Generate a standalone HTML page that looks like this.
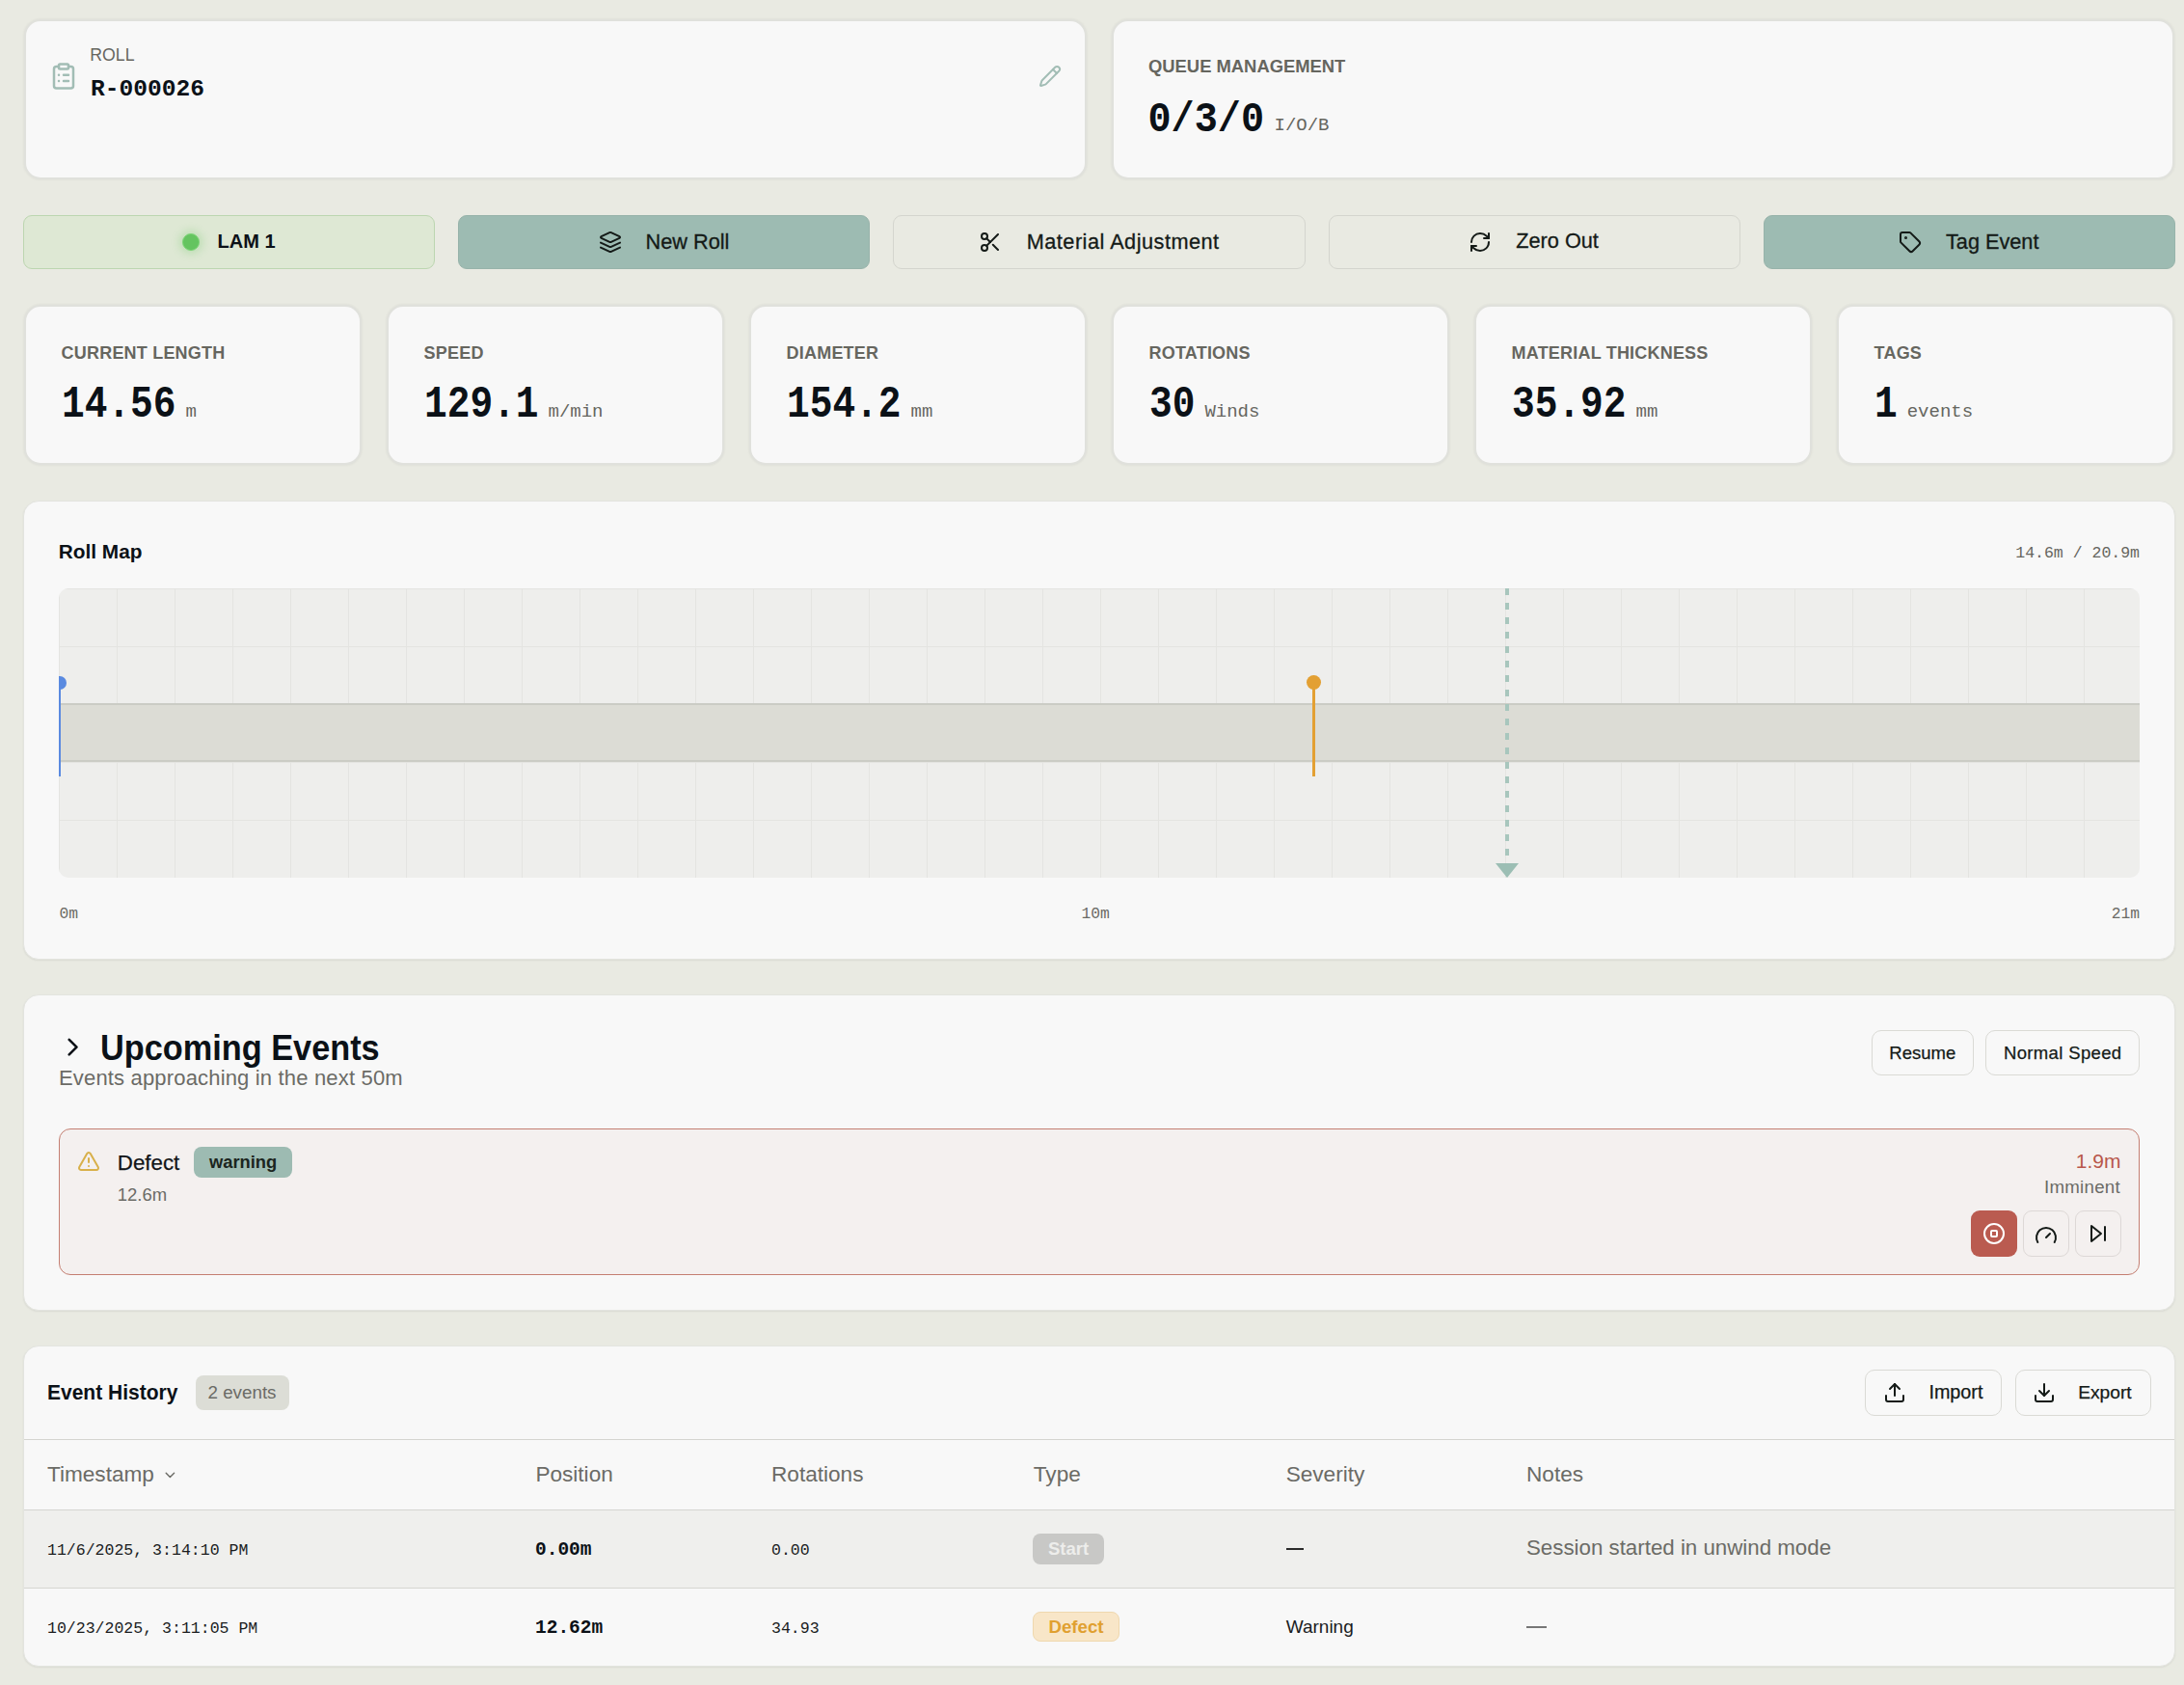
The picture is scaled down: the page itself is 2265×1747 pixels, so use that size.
<!DOCTYPE html>
<html><head><meta charset="utf-8">
<style>
*{box-sizing:border-box;margin:0;padding:0}
html,body{width:2265px;height:1747px;overflow:hidden}
body{background:#E9EAE2;font-family:'Liberation Sans',sans-serif;color:#111417;position:relative}
.t{position:absolute;white-space:nowrap}
.r{position:absolute}
svg{display:block}
</style></head><body>

<div class="r" style="left:25px;top:20px;width:1102px;height:166px;background:#F8F8F8;border:2px solid #E0E1DC;border-radius:17px;box-shadow:0 0 2px 1px rgba(0,0,0,0.035)"></div>
<div class="r" style="left:1153px;top:20px;width:1102px;height:166px;background:#F8F8F8;border:2px solid #E0E1DC;border-radius:17px;box-shadow:0 0 2px 1px rgba(0,0,0,0.035)"></div>
<svg class="r" style="left:51px;top:64px;" width="30" height="30" viewBox="0 0 24 24" fill="none" stroke="#A2BDB5" stroke-width="2" stroke-linecap="round" stroke-linejoin="round"><rect width="8" height="4" x="8" y="2" rx="1" ry="1"/><path d="M16 4h2a2 2 0 0 1 2 2v14a2 2 0 0 1-2 2H6a2 2 0 0 1-2-2V6a2 2 0 0 1 2-2h2"/><path d="M12 11h4"/><path d="M12 16h4"/><path d="M8 11h.01"/><path d="M8 16h.01"/></svg>
<div class="t" style="left:93.3px;top:49.02px;font-size:17.7px;line-height:17.7px;font-family:'Liberation Sans',sans-serif;font-weight:normal;color:#66665F;">ROLL</div>
<div class="t" style="left:94px;top:81.15px;font-size:24.6px;line-height:24.6px;font-family:'Liberation Mono',monospace;font-weight:bold;color:#0B1117;">R-000026</div>
<svg class="r" style="left:1077px;top:67px;" width="24" height="24" viewBox="0 0 24 24" fill="none" stroke="#A2BDB5" stroke-width="2" stroke-linecap="round" stroke-linejoin="round"><path d="M21.174 6.812a1 1 0 0 0-3.986-3.987L3.842 16.174a2 2 0 0 0-.5.83l-1.321 4.352a.5.5 0 0 0 .623.622l4.353-1.32a2 2 0 0 0 .83-.497z"/><path d="m15 5 4 4"/></svg>
<div class="t" style="left:1191px;top:59.92px;font-size:18.4px;line-height:18.4px;font-family:'Liberation Sans',sans-serif;font-weight:bold;color:#66665F;">QUEUE MANAGEMENT</div>
<div class="t" style="left:1190.5px;top:106.00px;font-size:40.2px;line-height:40.2px;font-family:'Liberation Mono',monospace;font-weight:bold;color:#0B1117;transform:scale(1.0,1.085);transform-origin:0 30.80px;">0/3/0</div>
<div class="t" style="left:1321.5px;top:120.94px;font-size:19px;line-height:19px;font-family:'Liberation Mono',monospace;font-weight:normal;color:#66665F;">I/O/B</div>
<div class="r" style="left:24px;top:223px;width:427.2px;height:56px;border-radius:9px;background:#DEE8D4;border:1px solid #BCD6B0"></div>
<div class="r" style="left:475.2px;top:223px;width:427.2px;height:56px;border-radius:9px;background:#9DBBB2;border:1px solid #97B3AA"></div>
<div class="r" style="left:926.4px;top:223px;width:427.2px;height:56px;border-radius:9px;border:1px solid #D4D5CE"></div>
<div class="r" style="left:1377.6px;top:223px;width:427.2px;height:56px;border-radius:9px;border:1px solid #D4D5CE"></div>
<div class="r" style="left:1828.8px;top:223px;width:427.2px;height:56px;border-radius:9px;background:#9DBBB2;border:1px solid #97B3AA"></div>
<div class="r" style="left:189px;top:242px;width:18px;height:18px;border-radius:50%;background:#64C45F;border:1px solid #7DD477;box-shadow:0 0 8px 3px rgba(100,196,95,0.28)"></div>
<div class="t" style="left:225.5px;top:240.27px;font-size:20px;line-height:20px;font-family:'Liberation Sans',sans-serif;font-weight:bold;color:#0B1117;">LAM 1</div>
<svg class="r" style="left:621px;top:238.8px;" width="24" height="24" viewBox="0 0 24 24" fill="none" stroke="#141A17" stroke-width="2" stroke-linecap="round" stroke-linejoin="round"><path d="m12.83 2.18a2 2 0 0 0-1.66 0L2.6 6.08a1 1 0 0 0 0 1.83l8.58 3.91a2 2 0 0 0 1.66 0l8.58-3.9a1 1 0 0 0 0-1.83Z"/><path d="m22 17.65-9.17 4.16a2 2 0 0 1-1.66 0L2 17.65"/><path d="m22 12.65-9.17 4.16a2 2 0 0 1-1.66 0L2 12.65"/></svg>
<div class="t" style="left:669.6px;top:239.63px;font-size:21.7px;line-height:21.7px;font-family:'Liberation Sans',sans-serif;font-weight:normal;color:#141A17;-webkit-text-stroke:0.3px #141A17;">New Roll</div>
<svg class="r" style="left:1014.7px;top:239px;" width="24" height="24" viewBox="0 0 24 24" fill="none" stroke="#141A17" stroke-width="2" stroke-linecap="round" stroke-linejoin="round"><circle cx="6" cy="6" r="3"/><path d="M8.12 8.12 12 12"/><path d="M20 4 8.12 15.88"/><circle cx="6" cy="18" r="3"/><path d="M14.8 14.8 20 20"/></svg>
<div class="t" style="left:1064.7px;top:239.63px;font-size:21.7px;line-height:21.7px;font-family:'Liberation Sans',sans-serif;font-weight:normal;color:#141A17;letter-spacing:0.5px;-webkit-text-stroke:0.3px #141A17;">Material Adjustment</div>
<svg class="r" style="left:1522.8px;top:239px;" width="24" height="24" viewBox="0 0 24 24" fill="none" stroke="#141A17" stroke-width="2" stroke-linecap="round" stroke-linejoin="round"><path d="M3 12a9 9 0 0 1 9-9 9.75 9.75 0 0 1 6.74 2.74L21 8"/><path d="M21 3v5h-5"/><path d="M21 12a9 9 0 0 1-9 9 9.75 9.75 0 0 1-6.74-2.74L3 16"/><path d="M8 16H3v5"/></svg>
<div class="t" style="left:1572.3px;top:239.33px;font-size:21.7px;line-height:21.7px;font-family:'Liberation Sans',sans-serif;font-weight:normal;color:#141A17;-webkit-text-stroke:0.3px #141A17;">Zero Out</div>
<svg class="r" style="left:1969.2px;top:239.3px;" width="24" height="24" viewBox="0 0 24 24" fill="none" stroke="#141A17" stroke-width="2" stroke-linecap="round" stroke-linejoin="round"><path d="M12.586 2.586A2 2 0 0 0 11.172 2H4a2 2 0 0 0-2 2v7.172a2 2 0 0 0 .586 1.414l8.704 8.704a2.426 2.426 0 0 0 3.42 0l6.58-6.58a2.426 2.426 0 0 0 0-3.42z"/><circle cx="7.5" cy="7.5" r=".5" fill="currentColor"/></svg>
<div class="t" style="left:2018px;top:239.63px;font-size:21.7px;line-height:21.7px;font-family:'Liberation Sans',sans-serif;font-weight:normal;color:#141A17;-webkit-text-stroke:0.3px #141A17;">Tag Event</div>
<div class="r" style="left:25px;top:316px;width:350px;height:166px;background:#F8F8F8;border:2px solid #E0E1DC;border-radius:17px;box-shadow:0 0 2px 1px rgba(0,0,0,0.035)"></div>
<div class="t" style="left:63.6px;top:356.66px;font-size:18px;line-height:18px;font-family:'Liberation Sans',sans-serif;font-weight:bold;color:#66665F;letter-spacing:0.2px;">CURRENT LENGTH</div>
<div class="t" style="left:64px;top:402.04px;font-size:39.5px;line-height:39.5px;font-family:'Liberation Mono',monospace;font-weight:bold;color:#0B1117;transform:scale(1.0,1.15);transform-origin:0 30.26px;">14.56</div>
<div class="t" style="left:192.5px;top:417.74px;font-size:19px;line-height:19px;font-family:'Liberation Mono',monospace;font-weight:normal;color:#66665F;">m</div>
<div class="r" style="left:401px;top:316px;width:350px;height:166px;background:#F8F8F8;border:2px solid #E0E1DC;border-radius:17px;box-shadow:0 0 2px 1px rgba(0,0,0,0.035)"></div>
<div class="t" style="left:439.6px;top:356.66px;font-size:18px;line-height:18px;font-family:'Liberation Sans',sans-serif;font-weight:bold;color:#66665F;letter-spacing:0.2px;">SPEED</div>
<div class="t" style="left:440px;top:402.04px;font-size:39.5px;line-height:39.5px;font-family:'Liberation Mono',monospace;font-weight:bold;color:#0B1117;transform:scale(1.0,1.15);transform-origin:0 30.26px;">129.1</div>
<div class="t" style="left:568.5px;top:417.74px;font-size:19px;line-height:19px;font-family:'Liberation Mono',monospace;font-weight:normal;color:#66665F;">m/min</div>
<div class="r" style="left:777px;top:316px;width:350px;height:166px;background:#F8F8F8;border:2px solid #E0E1DC;border-radius:17px;box-shadow:0 0 2px 1px rgba(0,0,0,0.035)"></div>
<div class="t" style="left:815.6px;top:356.66px;font-size:18px;line-height:18px;font-family:'Liberation Sans',sans-serif;font-weight:bold;color:#66665F;letter-spacing:0.2px;">DIAMETER</div>
<div class="t" style="left:816px;top:402.04px;font-size:39.5px;line-height:39.5px;font-family:'Liberation Mono',monospace;font-weight:bold;color:#0B1117;transform:scale(1.0,1.15);transform-origin:0 30.26px;">154.2</div>
<div class="t" style="left:944.5px;top:417.74px;font-size:19px;line-height:19px;font-family:'Liberation Mono',monospace;font-weight:normal;color:#66665F;">mm</div>
<div class="r" style="left:1153px;top:316px;width:350px;height:166px;background:#F8F8F8;border:2px solid #E0E1DC;border-radius:17px;box-shadow:0 0 2px 1px rgba(0,0,0,0.035)"></div>
<div class="t" style="left:1191.6px;top:356.66px;font-size:18px;line-height:18px;font-family:'Liberation Sans',sans-serif;font-weight:bold;color:#66665F;letter-spacing:0.2px;">ROTATIONS</div>
<div class="t" style="left:1192px;top:402.04px;font-size:39.5px;line-height:39.5px;font-family:'Liberation Mono',monospace;font-weight:bold;color:#0B1117;transform:scale(1.0,1.15);transform-origin:0 30.26px;">30</div>
<div class="t" style="left:1249.4px;top:417.74px;font-size:19px;line-height:19px;font-family:'Liberation Mono',monospace;font-weight:normal;color:#66665F;">Winds</div>
<div class="r" style="left:1529px;top:316px;width:350px;height:166px;background:#F8F8F8;border:2px solid #E0E1DC;border-radius:17px;box-shadow:0 0 2px 1px rgba(0,0,0,0.035)"></div>
<div class="t" style="left:1567.6px;top:356.66px;font-size:18px;line-height:18px;font-family:'Liberation Sans',sans-serif;font-weight:bold;color:#66665F;letter-spacing:0.2px;">MATERIAL THICKNESS</div>
<div class="t" style="left:1568px;top:402.04px;font-size:39.5px;line-height:39.5px;font-family:'Liberation Mono',monospace;font-weight:bold;color:#0B1117;transform:scale(1.0,1.15);transform-origin:0 30.26px;">35.92</div>
<div class="t" style="left:1696.5px;top:417.74px;font-size:19px;line-height:19px;font-family:'Liberation Mono',monospace;font-weight:normal;color:#66665F;">mm</div>
<div class="r" style="left:1905px;top:316px;width:350px;height:166px;background:#F8F8F8;border:2px solid #E0E1DC;border-radius:17px;box-shadow:0 0 2px 1px rgba(0,0,0,0.035)"></div>
<div class="t" style="left:1943.6px;top:356.66px;font-size:18px;line-height:18px;font-family:'Liberation Sans',sans-serif;font-weight:bold;color:#66665F;letter-spacing:0.2px;">TAGS</div>
<div class="t" style="left:1944px;top:402.04px;font-size:39.5px;line-height:39.5px;font-family:'Liberation Mono',monospace;font-weight:bold;color:#0B1117;transform:scale(1.0,1.15);transform-origin:0 30.26px;">1</div>
<div class="t" style="left:1977.7px;top:417.74px;font-size:19px;line-height:19px;font-family:'Liberation Mono',monospace;font-weight:normal;color:#66665F;">events</div>
<div class="r" style="left:24px;top:519px;width:2232px;height:476px;background:#F8F8F8;border:1px solid #E3E4DF;border-radius:16px;box-shadow:0 1px 2px rgba(0,0,0,0.07)"></div>
<div class="t" style="left:60.8px;top:561.59px;font-size:20.8px;line-height:20.8px;font-family:'Liberation Sans',sans-serif;font-weight:bold;color:#0B1117;">Roll Map</div>
<div class="t" style="right:46px;top:565.56px;font-size:16.5px;line-height:16.5px;font-family:'Liberation Mono',monospace;font-weight:normal;color:#66665F;">14.6m / 20.9m</div>
<div class="r" style="left:61px;top:610px;width:2158px;height:300px;border-radius:10px;overflow:hidden;background-color:#EEEEEC;background-image:linear-gradient(to right, transparent 59px, #E4E4E1 59px, #E4E4E1 60px, transparent 60px),linear-gradient(to bottom, transparent 59px, #E4E4E1 59px, #E4E4E1 60px, transparent 60px);background-size:60px 60px;background-position:1px 1px">
<div class="r" style="left:0;top:119px;width:2158px;height:61px;background:#DCDCD5;border-top:2px solid #CBCCC5;border-bottom:2px solid #CBCCC5"></div>
<div class="r" style="left:0;top:97px;width:2px;height:98px;background:#5A8AE0"></div>
<div class="r" style="left:-6px;top:90.5px;width:14px;height:14px;border-radius:50%;background:#5A8AE0"></div>
<div class="r" style="left:1299.8px;top:97px;width:3px;height:98px;background:#E3A033"></div>
<div class="r" style="left:1293.8px;top:89.5px;width:15px;height:15px;border-radius:50%;background:#E3A033"></div>
<div class="r" style="left:1500px;top:0;width:4px;height:285px;background:repeating-linear-gradient(to bottom,#A8C6BD 0,#A8C6BD 7px,transparent 7px,transparent 15px)"></div>
<svg class="r" style="left:1490px;top:285px" width="24" height="15" viewBox="0 0 24 15"><polygon points="0,0 24,0 12,15" fill="#9CBEB4"/></svg>
</div>
<div class="t" style="left:61.4px;top:939.51px;font-size:16.3px;line-height:16.3px;font-family:'Liberation Mono',monospace;font-weight:normal;color:#6B6B66;">0m</div>
<div class="t" style="left:1121.5px;top:939.51px;font-size:16.3px;line-height:16.3px;font-family:'Liberation Mono',monospace;font-weight:normal;color:#6B6B66;">10m</div>
<div class="t" style="right:46px;top:939.51px;font-size:16.3px;line-height:16.3px;font-family:'Liberation Mono',monospace;font-weight:normal;color:#6B6B66;">21m</div>
<div class="r" style="left:24px;top:1031px;width:2232px;height:328px;background:#F8F8F8;border:1px solid #E3E4DF;border-radius:16px;box-shadow:0 1px 2px rgba(0,0,0,0.07)"></div>
<svg class="r" style="left:60.4px;top:1070.4px;" width="31.2" height="31.2" viewBox="0 0 24 24" fill="none" stroke="#0B1117" stroke-width="2" stroke-linecap="round" stroke-linejoin="round"><path d="m9 18 6-6-6-6"/></svg>
<div class="t" style="left:104px;top:1070.16px;font-size:34.3px;line-height:34.3px;font-family:'Liberation Sans',sans-serif;font-weight:bold;color:#0B1117;transform:scale(1.0,1.1);transform-origin:0 29.04px;">Upcoming Events</div>
<div class="t" style="left:61px;top:1107.27px;font-size:22px;line-height:22px;font-family:'Liberation Sans',sans-serif;font-weight:normal;color:#6B6B66;letter-spacing:0.17px;">Events approaching in the next 50m</div>
<div class="r" style="left:1940.6px;top:1068.3px;width:106px;height:47.2px;border:1px solid #DADAD5;border-radius:10px;"></div>
<div class="t" style="left:1959.3px;top:1082.84px;font-size:18.5px;line-height:18.5px;font-family:'Liberation Sans',sans-serif;font-weight:normal;color:#141A17;-webkit-text-stroke:0.25px #141A17;">Resume</div>
<div class="r" style="left:2059.4px;top:1068.3px;width:159.3px;height:47.2px;border:1px solid #DADAD5;border-radius:10px;"></div>
<div class="t" style="left:2078px;top:1082.84px;font-size:18.5px;line-height:18.5px;font-family:'Liberation Sans',sans-serif;font-weight:normal;color:#141A17;letter-spacing:0.35px;-webkit-text-stroke:0.25px #141A17;">Normal Speed</div>
<div class="r" style="left:61px;top:1170px;width:2158px;height:152px;background:#F4F0EF;border:1px solid #C47F72;border-radius:12px"></div>
<svg class="r" style="left:79.7px;top:1192px;" width="24" height="24" viewBox="0 0 24 24" fill="none" stroke="#D8B04A" stroke-width="2" stroke-linecap="round" stroke-linejoin="round"><path d="m21.73 18-8-14a2 2 0 0 0-3.48 0l-8 14A2 2 0 0 0 4 21h16a2 2 0 0 0 1.73-3"/><path d="M12 9v4"/><path d="M12 17h.01"/></svg>
<div class="t" style="left:121.8px;top:1194.72px;font-size:22.3px;line-height:22.3px;font-family:'Liberation Sans',sans-serif;font-weight:normal;color:#111417;-webkit-text-stroke:0.25px #111417;">Defect</div>
<div class="r" style="left:201px;top:1189px;width:102px;height:32px;background:#9DBBB2;border-radius:8px"></div>
<div class="t" style="left:217px;top:1195.91px;font-size:18.3px;line-height:18.3px;font-family:'Liberation Sans',sans-serif;font-weight:bold;color:#1B2520;">warning</div>
<div class="t" style="left:121.8px;top:1230.14px;font-size:18.5px;line-height:18.5px;font-family:'Liberation Sans',sans-serif;font-weight:normal;color:#6B6B66;">12.6m</div>
<div class="t" style="right:65.5px;top:1193.22px;font-size:21px;line-height:21px;font-family:'Liberation Sans',sans-serif;font-weight:normal;color:#B8574B;">1.9m</div>
<div class="t" style="right:66px;top:1222.17px;font-size:18.7px;line-height:18.7px;font-family:'Liberation Sans',sans-serif;font-weight:normal;color:#6B6B66;letter-spacing:0.28px;">Imminent</div>
<div class="r" style="left:2044.2px;top:1255px;width:47.6px;height:47.8px;background:#BA5B50;border-radius:9px"></div>
<svg class="r" style="left:2055.9px;top:1267.2px;" width="24" height="24" viewBox="0 0 24 24" fill="none" stroke="#FFFFFF" stroke-width="2" stroke-linecap="round" stroke-linejoin="round"><circle cx="12" cy="12" r="10"/><rect x="9" y="9" width="6" height="6" rx="1"/></svg>
<div class="r" style="left:2098.2px;top:1255px;width:47.6px;height:47.8px;border:1px solid #DDD8D6;border-radius:9px"></div>
<svg class="r" style="left:2109.6px;top:1269.3px;" width="24" height="24" viewBox="0 0 24 24" fill="none" stroke="#141A17" stroke-width="2" stroke-linecap="round" stroke-linejoin="round"><path d="m12 14 4-4"/><path d="M3.34 19a10 10 0 1 1 17.32 0"/></svg>
<div class="r" style="left:2152.3px;top:1255px;width:47.6px;height:47.8px;border:1px solid #DDD8D6;border-radius:9px"></div>
<svg class="r" style="left:2164px;top:1267.3px;" width="24" height="24" viewBox="0 0 24 24" fill="none" stroke="#141A17" stroke-width="2" stroke-linecap="round" stroke-linejoin="round"><polygon points="5 4 15 12 5 20 5 4"/><line x1="19" x2="19" y1="5" y2="19"/></svg>
<div class="r" style="left:24px;top:1395px;width:2232px;height:333px;background:#F8F8F8;border:1px solid #E3E4DF;border-radius:16px;box-shadow:0 1px 2px rgba(0,0,0,0.07)"></div>
<div class="t" style="left:49px;top:1433.32px;font-size:21px;line-height:21px;font-family:'Liberation Sans',sans-serif;font-weight:bold;color:#0B1117;transform:scale(1.0,1.08);transform-origin:0 17.78px;">Event History</div>
<div class="r" style="left:203px;top:1426px;width:97px;height:36px;background:#DCDDD6;border-radius:8px"></div>
<div class="t" style="left:215.5px;top:1435.38px;font-size:18.8px;line-height:18.8px;font-family:'Liberation Sans',sans-serif;font-weight:normal;color:#6B6B66;">2 events</div>
<div class="r" style="left:1934.3px;top:1420.3px;width:142px;height:47.3px;border:1px solid #DADAD5;border-radius:10px;"></div>
<svg class="r" style="left:1952.6px;top:1432.3px;" width="24" height="24" viewBox="0 0 24 24" fill="none" stroke="#141A17" stroke-width="2" stroke-linecap="round" stroke-linejoin="round"><path d="M21 15v4a2 2 0 0 1-2 2H5a2 2 0 0 1-2-2v-4"/><polyline points="17 8 12 3 7 8"/><line x1="12" x2="12" y1="3" y2="15"/></svg>
<div class="t" style="left:2000.4px;top:1433.74px;font-size:19.8px;line-height:19.8px;font-family:'Liberation Sans',sans-serif;font-weight:normal;color:#141A17;-webkit-text-stroke:0.25px #141A17;">Import</div>
<div class="r" style="left:2089.5px;top:1420.3px;width:141px;height:47.3px;border:1px solid #DADAD5;border-radius:10px;"></div>
<svg class="r" style="left:2107.5px;top:1432.3px;" width="24" height="24" viewBox="0 0 24 24" fill="none" stroke="#141A17" stroke-width="2" stroke-linecap="round" stroke-linejoin="round"><path d="M21 15v4a2 2 0 0 1-2 2H5a2 2 0 0 1-2-2v-4"/><polyline points="7 10 12 15 17 10"/><line x1="12" x2="12" y1="15" y2="3"/></svg>
<div class="t" style="left:2155.2px;top:1434.25px;font-size:19.2px;line-height:19.2px;font-family:'Liberation Sans',sans-serif;font-weight:normal;color:#141A17;-webkit-text-stroke:0.25px #141A17;">Export</div>
<div class="r" style="left:25px;top:1492px;width:2230px;height:1px;background:#D5D5D1"></div>
<div class="t" style="left:49px;top:1517.57px;font-size:22.6px;line-height:22.6px;font-family:'Liberation Sans',sans-serif;font-weight:normal;color:#6B6B66;">Timestamp</div>
<svg class="r" style="left:167.6px;top:1520.6px;" width="16.8" height="16.8" viewBox="0 0 24 24" fill="none" stroke="#6B6B66" stroke-width="2" stroke-linecap="round" stroke-linejoin="round"><path d="m6 9 6 6 6-6"/></svg>
<div class="t" style="left:555.4px;top:1517.57px;font-size:22.6px;line-height:22.6px;font-family:'Liberation Sans',sans-serif;font-weight:normal;color:#6B6B66;">Position</div>
<div class="t" style="left:800px;top:1517.57px;font-size:22.6px;line-height:22.6px;font-family:'Liberation Sans',sans-serif;font-weight:normal;color:#6B6B66;">Rotations</div>
<div class="t" style="left:1071.8px;top:1517.57px;font-size:22.6px;line-height:22.6px;font-family:'Liberation Sans',sans-serif;font-weight:normal;color:#6B6B66;">Type</div>
<div class="t" style="left:1333.7px;top:1517.57px;font-size:22.6px;line-height:22.6px;font-family:'Liberation Sans',sans-serif;font-weight:normal;color:#6B6B66;">Severity</div>
<div class="t" style="left:1583px;top:1517.57px;font-size:22.6px;line-height:22.6px;font-family:'Liberation Sans',sans-serif;font-weight:normal;color:#6B6B66;">Notes</div>
<div class="r" style="left:25px;top:1565px;width:2230px;height:1px;background:#D5D5D1"></div>
<div class="r" style="left:25px;top:1566px;width:2230px;height:80px;background:#EFEFED"></div>
<div class="r" style="left:25px;top:1646px;width:2230px;height:1px;background:#D5D5D1"></div>
<div class="t" style="left:49px;top:1599.62px;font-size:16.55px;line-height:16.55px;font-family:'Liberation Mono',monospace;font-weight:normal;color:#1A1C1E;">11/6/2025, 3:14:10 PM</div>
<div class="t" style="left:555px;top:1598.06px;font-size:19.5px;line-height:19.5px;font-family:'Liberation Mono',monospace;font-weight:bold;color:#0B1117;">0.00m</div>
<div class="t" style="left:800px;top:1599.92px;font-size:16.55px;line-height:16.55px;font-family:'Liberation Mono',monospace;font-weight:normal;color:#1A1C1E;">0.00</div>
<div class="r" style="left:1071px;top:1590px;width:74px;height:32px;background:#C8C8C6;border-radius:8px"></div>
<div class="t" style="left:108px;width:2000px;text-align:center;top:1597.34px;font-size:18.5px;line-height:18.5px;font-family:'Liberation Sans',sans-serif;font-weight:bold;color:#EDEDEB;">Start</div>
<div class="r" style="left:1334px;top:1605.4px;width:17.5px;height:1.8px;background:#2A2A2A"></div>
<div class="t" style="left:1583px;top:1594.12px;font-size:22.3px;line-height:22.3px;font-family:'Liberation Sans',sans-serif;font-weight:normal;color:#6B6B66;">Session started in unwind mode</div>
<div class="t" style="left:49px;top:1681.32px;font-size:16.55px;line-height:16.55px;font-family:'Liberation Mono',monospace;font-weight:normal;color:#1A1C1E;">10/23/2025, 3:11:05 PM</div>
<div class="t" style="left:555px;top:1679.06px;font-size:19.5px;line-height:19.5px;font-family:'Liberation Mono',monospace;font-weight:bold;color:#0B1117;">12.62m</div>
<div class="t" style="left:800px;top:1681.32px;font-size:16.55px;line-height:16.55px;font-family:'Liberation Mono',monospace;font-weight:normal;color:#1A1C1E;">34.93</div>
<div class="r" style="left:1071px;top:1671.2px;width:90px;height:31.3px;background:#F8E6C8;border:1px solid #EFD8AE;border-radius:8px"></div>
<div class="t" style="left:116px;width:2000px;text-align:center;top:1678.17px;font-size:18.7px;line-height:18.7px;font-family:'Liberation Sans',sans-serif;font-weight:bold;color:#E0A030;">Defect</div>
<div class="t" style="left:1333.7px;top:1677.11px;font-size:19px;line-height:19px;font-family:'Liberation Sans',sans-serif;font-weight:normal;color:#1A1C1E;">Warning</div>
<div class="r" style="left:1583px;top:1686px;width:21px;height:2px;background:#777"></div>
</body></html>
